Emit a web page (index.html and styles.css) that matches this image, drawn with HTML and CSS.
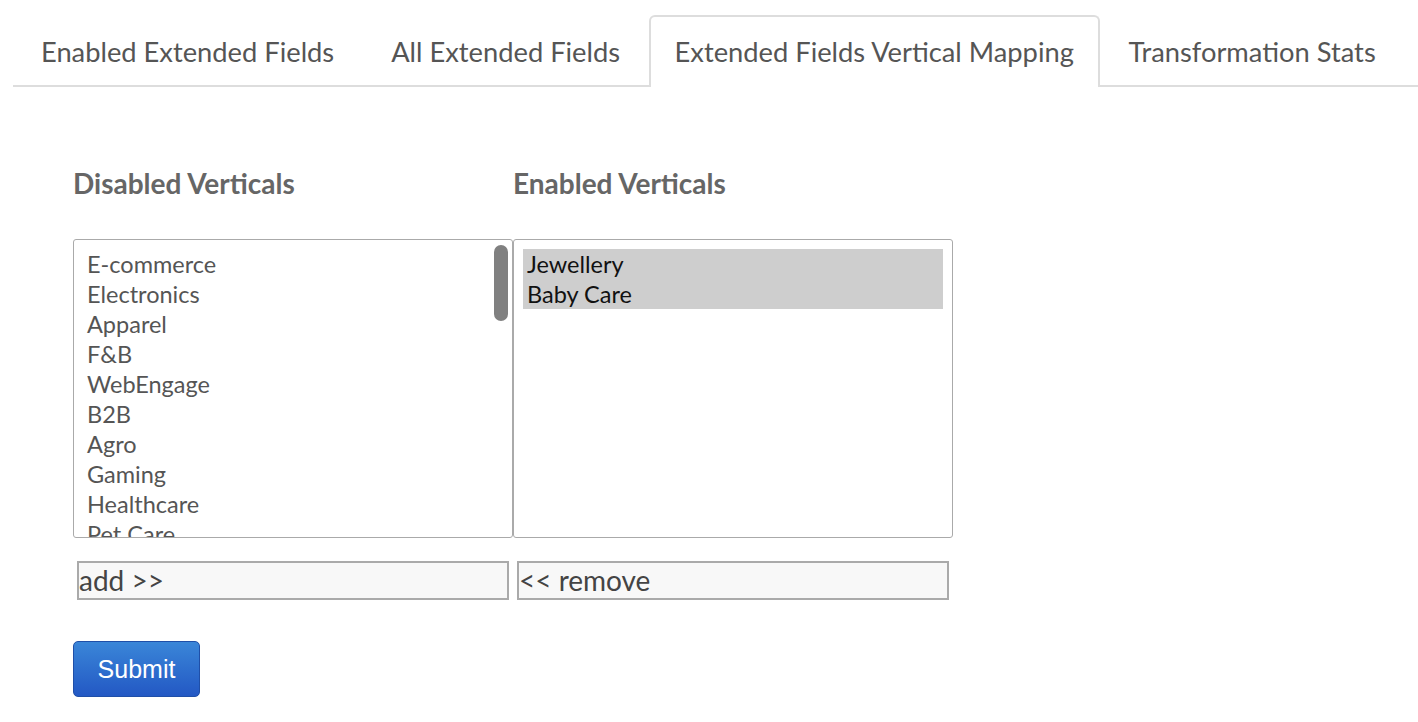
FILE: index.html
```html
<!DOCTYPE html>
<html>
<head>
<meta charset="utf-8">
<link rel="stylesheet" href="styles.css">
</head>
<body>
<div class="tabs">
  <div class="tab">Enabled Extended Fields</div>
  <div class="tab">All Extended Fields</div>
  <div class="tab active">Extended Fields Vertical Mapping</div>
  <div class="tab">Transformation Stats</div>
</div>
<div class="content">
  <div class="columns">
    <div class="col">
      <h3 class="heading">Disabled Verticals</h3>
      <div class="list">
        <div class="opt">E-commerce</div>
        <div class="opt">Electronics</div>
        <div class="opt">Apparel</div>
        <div class="opt">F&amp;B</div>
        <div class="opt">WebEngage</div>
        <div class="opt">B2B</div>
        <div class="opt">Agro</div>
        <div class="opt">Gaming</div>
        <div class="opt">Healthcare</div>
        <div class="opt">Pet Care</div>
        <div class="opt">Education</div>
        <div class="thumb"></div>
      </div>
      <button class="move">add &gt;&gt;</button>
    </div>
    <div class="col">
      <h3 class="heading">Enabled Verticals</h3>
      <div class="list enabled">
        <div class="opt sel">Jewellery</div>
        <div class="opt sel">Baby Care</div>
      </div>
      <button class="move">&lt;&lt; remove</button>
    </div>
  </div>
  <button class="submit">Submit</button>
</div>
</body>
</html>
```
FILE: styles.css
```css
html, body { margin: 0; padding: 0; background: #fff; }
body { font-family: Lato, "Open Sans", sans-serif; color: #555; }

.tabs {
  display: flex;
  margin: 15px 0 0 13px;
  border-bottom: 2px solid #ddd;
  height: 70px;
}
.tab {
  font-size: 27.3px;
  padding: 0 26.5px;
  line-height: 70px;
  color: #555;
  white-space: nowrap;
  border: 2px solid transparent;
  border-bottom: none;
  border-radius: 6px 6px 0 0;
}
.tab:first-child { padding-left: 26px; }
.tab.active {
  border-color: #ddd;
  background: #fff;
  margin-bottom: -2px;
  height: 70px;
  line-height: 70px;
  padding: 0 24px;
}

.content { padding-left: 73px; }
.columns { display: flex; }
.col { display: flex; flex-direction: column; width: 440px; }
.heading {
  font-size: 28px;
  font-weight: bold;
  color: #666;
  margin: 81px 0 0 0;
  height: 71px;
  line-height: 30px;
}
.list {
  position: relative;
  height: 299px;
  border: 1px solid #aaa;
  border-radius: 3px;
  overflow: hidden;
  padding: 9px 0 0 13px;
  box-sizing: border-box;
}
.list.enabled { padding: 9px 9px 0 9px; }
.opt {
  font-size: 23.5px;
  line-height: 30px;
  height: 30px;
  color: #555;
}
.list.enabled .opt { padding-left: 4px; }
.opt.sel { background: #cecece; color: #111; }
.thumb {
  position: absolute;
  top: 5px;
  right: 4px;
  width: 14px;
  height: 76px;
  border-radius: 7px;
  background: #808080;
}
.move {
  margin: 23px 4px 0 4px;
  height: 39px;
  width: 432px;
  text-align: left;
  padding: 0;
  font-family: Lato, "Open Sans", sans-serif;
  font-size: 28px;
  line-height: 35px;
  color: #444;
  background: #f8f8f8;
  border: 2px solid #aaa;
  border-radius: 0;
}
.submit {
  margin-top: 41px;
  width: 127px;
  height: 56px;
  border: 1px solid #1f4fa8;
  border-radius: 5px;
  background: linear-gradient(#3a86d8, #2358c4);
  color: #fff;
  font-family: "Liberation Sans", Arial, sans-serif;
  font-size: 25px;
  padding: 0;
}
```
